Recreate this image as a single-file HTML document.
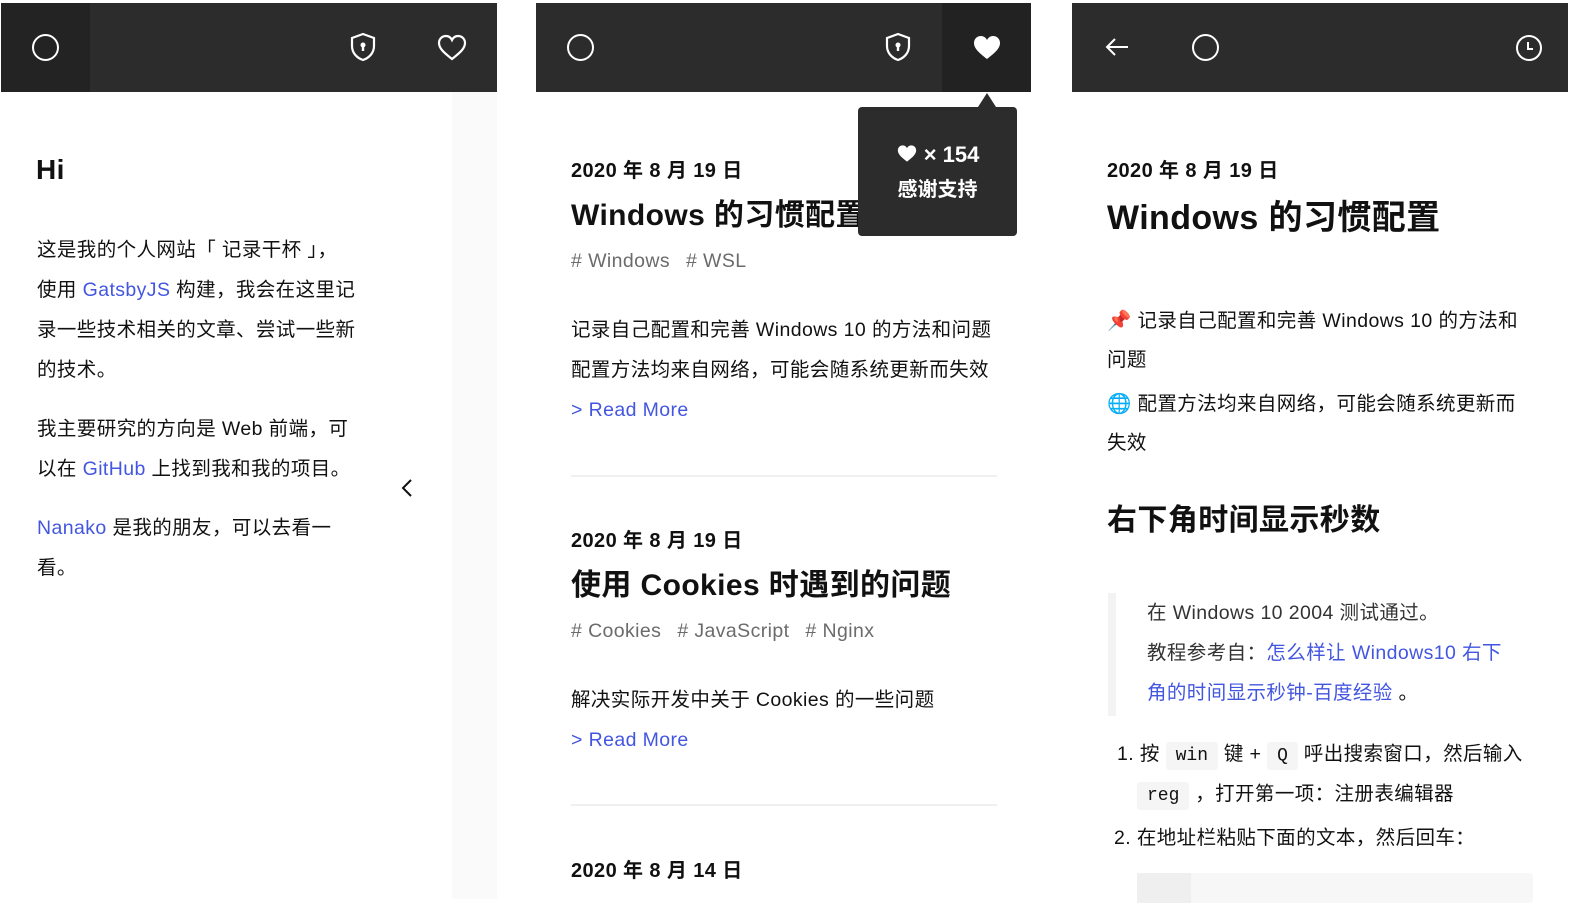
<!DOCTYPE html>
<html><head><meta charset="utf-8"><style>
*{margin:0;padding:0;box-sizing:border-box}
body{width:1581px;height:899px;background:#fff;position:relative;overflow:hidden;font-family:"Liberation Sans","Noto Sans CJK SC",sans-serif;color:#111}
.l{position:absolute;white-space:nowrap;line-height:40px;height:40px;font-size:19.5px;letter-spacing:0.4px}
.b{color:#4356e0}
.g{color:#6b6b6b}
.g span{margin-right:16px}
.d{font-size:20px;font-weight:600}
.t{font-size:30px;font-weight:700}
.hd{position:absolute;top:3px;height:89px;background:#2c2c2c}
.ic{position:absolute}
.sep{position:absolute;height:2px;background:#f0f0f0}
code{font-family:"Liberation Mono",monospace;background:#f5f5f5;padding:4px 10px;border-radius:3px;font-size:18px;letter-spacing:0}
</style></head><body>

<!-- Panel 1 -->
<div class="hd" style="left:1px;width:496px"></div>
<div style="position:absolute;left:1px;top:3px;width:89px;height:89px;background:#232323"></div>
<svg class="ic" style="left:31px;top:33px" width="29" height="29"><circle cx="14.5" cy="14.5" r="12.5" fill="none" stroke="#fff" stroke-width="2"/></svg>
<svg class="ic" style="left:349px;top:32px" width="28" height="30" viewBox="0 0 28 30"><path d="M14 2 L25 6 V14 C25 21 20 26 14 28 C8 26 3 21 3 14 V6 Z" fill="none" stroke="#fff" stroke-width="2.2"/><circle cx="14" cy="13" r="2.5" fill="#fff"/><rect x="12.8" y="13" width="2.4" height="6" fill="#fff"/></svg>
<svg class="ic" style="left:437px;top:34px" width="30" height="27" viewBox="0 0 30 27"><path d="M15 25 C6 18 2 14 2 9 C2 5 5 2 9 2 C12 2 14 4 15 6 C16 4 18 2 21 2 C25 2 28 5 28 9 C28 14 24 18 15 25 Z" fill="none" stroke="#fff" stroke-width="2.2"/></svg>
<div style="position:absolute;left:452px;top:92px;width:45px;height:807px;background:#fafafa"></div>
<div class="l" style="left:36px;top:150px;font-size:28px;font-weight:700">Hi</div>
<div class="l" style="left:37px;top:230px">这是我的个人网站「 记录干杯 」，</div>
<div class="l" style="left:37px;top:270px">使用 <span class="b">GatsbyJS</span> 构建，我会在这里记</div>
<div class="l" style="left:37px;top:310px">录一些技术相关的文章、尝试一些新</div>
<div class="l" style="left:37px;top:350px">的技术。</div>
<div class="l" style="left:37px;top:409px">我主要研究的方向是 Web 前端，可</div>
<div class="l" style="left:37px;top:449px">以在 <span class="b">GitHub</span> 上找到我和我的项目。</div>
<div class="l" style="left:37px;top:508px"><span class="b">Nanako</span> 是我的朋友，可以去看一</div>
<div class="l" style="left:37px;top:548px">看。</div>
<svg class="ic" style="left:400px;top:478px" width="14" height="20"><path d="M11 2 L3 10 L11 18" fill="none" stroke="#111" stroke-width="2"/></svg>

<!-- Panel 2 -->
<div class="hd" style="left:536px;width:495px"></div>
<div style="position:absolute;left:942px;top:3px;width:89px;height:89px;background:#222"></div>
<svg class="ic" style="left:566px;top:33px" width="29" height="29"><circle cx="14.5" cy="14.5" r="12.5" fill="none" stroke="#fff" stroke-width="2"/></svg>
<svg class="ic" style="left:884px;top:32px" width="28" height="30" viewBox="0 0 28 30"><path d="M14 2 L25 6 V14 C25 21 20 26 14 28 C8 26 3 21 3 14 V6 Z" fill="none" stroke="#fff" stroke-width="2.2"/><circle cx="14" cy="13" r="2.5" fill="#fff"/><rect x="12.8" y="13" width="2.4" height="6" fill="#fff"/></svg>
<svg class="ic" style="left:972px;top:34px" width="30" height="27" viewBox="0 0 30 27"><path d="M15 25 C6 18 2 14 2 9 C2 5 5 2 9 2 C12 2 14 4 15 6 C16 4 18 2 21 2 C25 2 28 5 28 9 C28 14 24 18 15 25 Z" fill="#fff"/></svg>
<div class="l d" style="left:571px;top:151px">2020 年 8 月 19 日</div>
<div class="l t" style="left:571px;top:196px">Windows 的习惯配置</div>
<div class="l g" style="left:571px;top:241px"><span># Windows</span><span># WSL</span></div>
<div class="l" style="left:571px;top:310px">记录自己配置和完善 Windows 10 的方法和问题</div>
<div class="l" style="left:571px;top:350px">配置方法均来自网络，可能会随系统更新而失效</div>
<div class="l b" style="left:571px;top:390px">&gt; Read More</div>
<div class="sep" style="left:571px;top:475px;width:426px"></div>
<div class="l d" style="left:571px;top:521px">2020 年 8 月 19 日</div>
<div class="l t" style="left:571px;top:566px">使用 Cookies 时遇到的问题</div>
<div class="l g" style="left:571px;top:611px"><span># Cookies</span><span># JavaScript</span><span># Nginx</span></div>
<div class="l" style="left:571px;top:680px">解决实际开发中关于 Cookies 的一些问题</div>
<div class="l b" style="left:571px;top:720px">&gt; Read More</div>
<div class="sep" style="left:571px;top:804px;width:426px"></div>
<div class="l d" style="left:571px;top:851px">2020 年 8 月 14 日</div>
<!-- tooltip -->
<div style="position:absolute;left:858px;top:107px;width:159px;height:129px;background:#2c2c2c;border-radius:4px"></div>
<div style="position:absolute;left:978px;top:93px;width:0;height:0;border-left:9px solid transparent;border-right:9px solid transparent;border-bottom:14px solid #2c2c2c"></div>
<div style="position:absolute;left:858px;top:138px;width:159px;text-align:center;color:#fff;font-weight:700;font-size:22px;line-height:34px;white-space:nowrap">
<svg width="22" height="19" viewBox="0 0 30 27" style="vertical-align:-1px"><path d="M15 25 C6 18 2 14 2 9 C2 5 5 2 9 2 C12 2 14 4 15 6 C16 4 18 2 21 2 C25 2 28 5 28 9 C28 14 24 18 15 25 Z" fill="#fff"/></svg> × 154<br><span style="font-size:20px">感谢支持</span></div>

<!-- Panel 3 -->
<div class="hd" style="left:1072px;width:496px"></div>
<svg class="ic" style="left:1104px;top:37px" width="26" height="20"><path d="M24 10 H3 M11 2 L3 10 L11 18" fill="none" stroke="#fff" stroke-width="2"/></svg>
<svg class="ic" style="left:1191px;top:33px" width="29" height="29"><circle cx="14.5" cy="14.5" r="12.5" fill="none" stroke="#fff" stroke-width="2"/></svg>
<svg class="ic" style="left:1515px;top:34px" width="28" height="28"><circle cx="14" cy="14" r="12" fill="none" stroke="#fff" stroke-width="2"/><path d="M13 8 V15 H18" fill="none" stroke="#fff" stroke-width="2"/></svg>
<div class="l d" style="left:1107px;top:151px">2020 年 8 月 19 日</div>
<div class="l" style="left:1107px;top:198px;font-size:34px;font-weight:700">Windows 的习惯配置</div>
<div class="l" style="left:1107px;top:301px">📌 记录自己配置和完善 Windows 10 的方法和</div>
<div class="l" style="left:1107px;top:340px">问题</div>
<div class="l" style="left:1107px;top:384px">🌐 配置方法均来自网络，可能会随系统更新而</div>
<div class="l" style="left:1107px;top:423px">失效</div>
<div class="l t" style="left:1107px;top:501px">右下角时间显示秒数</div>
<div style="position:absolute;left:1108px;top:593px;width:8px;height:123px;background:#f3f3f3"></div>
<div class="l" style="left:1147px;top:593px;color:#333">在 Windows 10 2004 测试通过。</div>
<div class="l" style="left:1147px;top:633px;color:#333">教程参考自：<span class="b">怎么样让 Windows10 右下</span></div>
<div class="l" style="left:1147px;top:673px"><span class="b">角的时间显示秒钟-百度经验</span> 。</div>
<div class="l" style="left:1117px;top:734px">1. 按 <code>win</code> 键 + <code>Q</code> 呼出搜索窗口，然后输入</div>
<div class="l" style="left:1137px;top:774px"><code>reg</code> ，打开第一项：注册表编辑器</div>
<div class="l" style="left:1114px;top:818px">2. 在地址栏粘贴下面的文本，然后回车：</div>
<div style="position:absolute;left:1137px;top:873px;width:396px;height:30px;background:#f7f7f7;border-radius:4px"></div>
<div style="position:absolute;left:1137px;top:873px;width:54px;height:30px;background:#efefef"></div>
</body></html>
